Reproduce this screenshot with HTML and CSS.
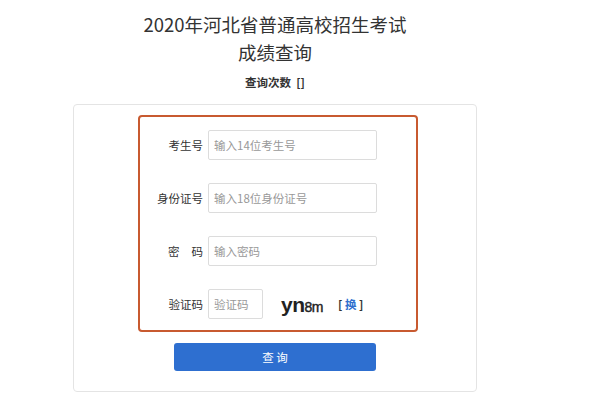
FILE: index.html
```html
<!DOCTYPE html>
<html lang="zh-CN">
<head>
  <meta charset="UTF-8">
  <meta name="viewport" content="width=device-width, initial-scale=1.0">
  <title>成绩查询</title>
  <link rel="stylesheet" href="styles.css">
</head>
<body>

  <div class="page">
    <h1 class="title">2020年河北省普通高校招生考试<br>成绩查询</h1>
    <p class="count">查询次数 &nbsp;[]</p>

    <div class="card">
      <div class="form-box">
        <div class="row">
          <label class="label" for="examNo">考生号</label>
          <input class="field" type="text" id="examNo" placeholder="输入14位考生号">
        </div>
        <div class="row">
          <label class="label" for="idNo">身份证号</label>
          <input class="field" type="text" id="idNo" placeholder="输入18位身份证号">
        </div>
        <div class="row">
          <label class="label label-spaced" for="pwd">密码</label>
          <input class="field" type="text" id="pwd" placeholder="输入密码">
        </div>
        <div class="row">
          <label class="label" for="code">验证码</label>
          <input class="field field-code" type="text" id="code" placeholder="验证码">
          <span class="captcha"><span class="captcha-big">yn</span><span class="captcha-small">8m</span></span>
          <span class="refresh">[ <a href="#">换</a> ]</span>
        </div>
      </div>

      <button class="submit">查 询</button>
    </div>
  </div>

</body>
</html>
```

FILE: styles.css
```css
body {
  margin: 0;
  padding: 0;
  background: #fff;
  font-family: "Noto Sans CJK SC", "Noto Sans", sans-serif;
  color: #333;
}

.page {
  width: 404px;
  margin-left: 73px;
  padding-top: 10px;
}

.title {
  margin: 0;
  font-size: 18.5px;
  font-weight: normal;
  line-height: 28px;
  text-align: center;
  color: #333;
}

.count {
  margin: 8px 0 0;
  font-size: 11.5px;
  font-weight: 700;
  line-height: 16px;
  text-align: center;
  color: #333;
}

.card {
  box-sizing: border-box;
  margin-top: 14px;
  border: 1px solid #e4e4e4;
  border-radius: 4px;
  padding: 10px 0 18px;
  height: 288px;
}

.form-box {
  box-sizing: border-box;
  width: 280px;
  margin-left: 64px;
  border: 2px solid #c85a30;
  border-radius: 4px;
  padding: 13px 0 11px;
  display: flex;
  flex-direction: column;
  gap: 23px;
}

.row {
  display: flex;
  align-items: center;
  height: 30px;
}

.label {
  width: 63px;
  margin-right: 5px;
  text-align: right;
  font-size: 11.5px;
  color: #333;
}

.label-spaced {
  letter-spacing: 12px;
  margin-right: -7px;
  width: 75px;
}

.field {
  box-sizing: border-box;
  width: 169px;
  height: 30px;
  border: 1px solid #dcdcdc;
  border-radius: 2px;
  padding: 0 5px;
  font-family: inherit;
  font-size: 11.5px;
  color: #333;
  outline: none;
}

.field::placeholder {
  color: #999;
}

.field-code {
  width: 55px;
}

.captcha {
  margin-left: 18px;
  font-family: "Liberation Sans", Arial, sans-serif;
  font-weight: 700;
  color: #222;
  line-height: 1;
}

.captcha-big {
  font-size: 21px;
  letter-spacing: -0.5px;
}

.captcha-small {
  font-size: 14px;
  font-weight: 400;
  letter-spacing: -0.5px;
  -webkit-text-stroke: 0.4px #222;
}

.refresh {
  margin-left: 15px;
  font-size: 11.5px;
  font-weight: 700;
  color: #333;
}

.refresh a {
  color: #2f6fce;
  text-decoration: none;
}

.submit {
  display: block;
  width: 202px;
  height: 28px;
  margin: 11px auto 0;
  border: none;
  border-radius: 3px;
  background: #2e6fd0;
  color: #fff;
  font-family: inherit;
  font-size: 11.5px;
  cursor: pointer;
}
```
